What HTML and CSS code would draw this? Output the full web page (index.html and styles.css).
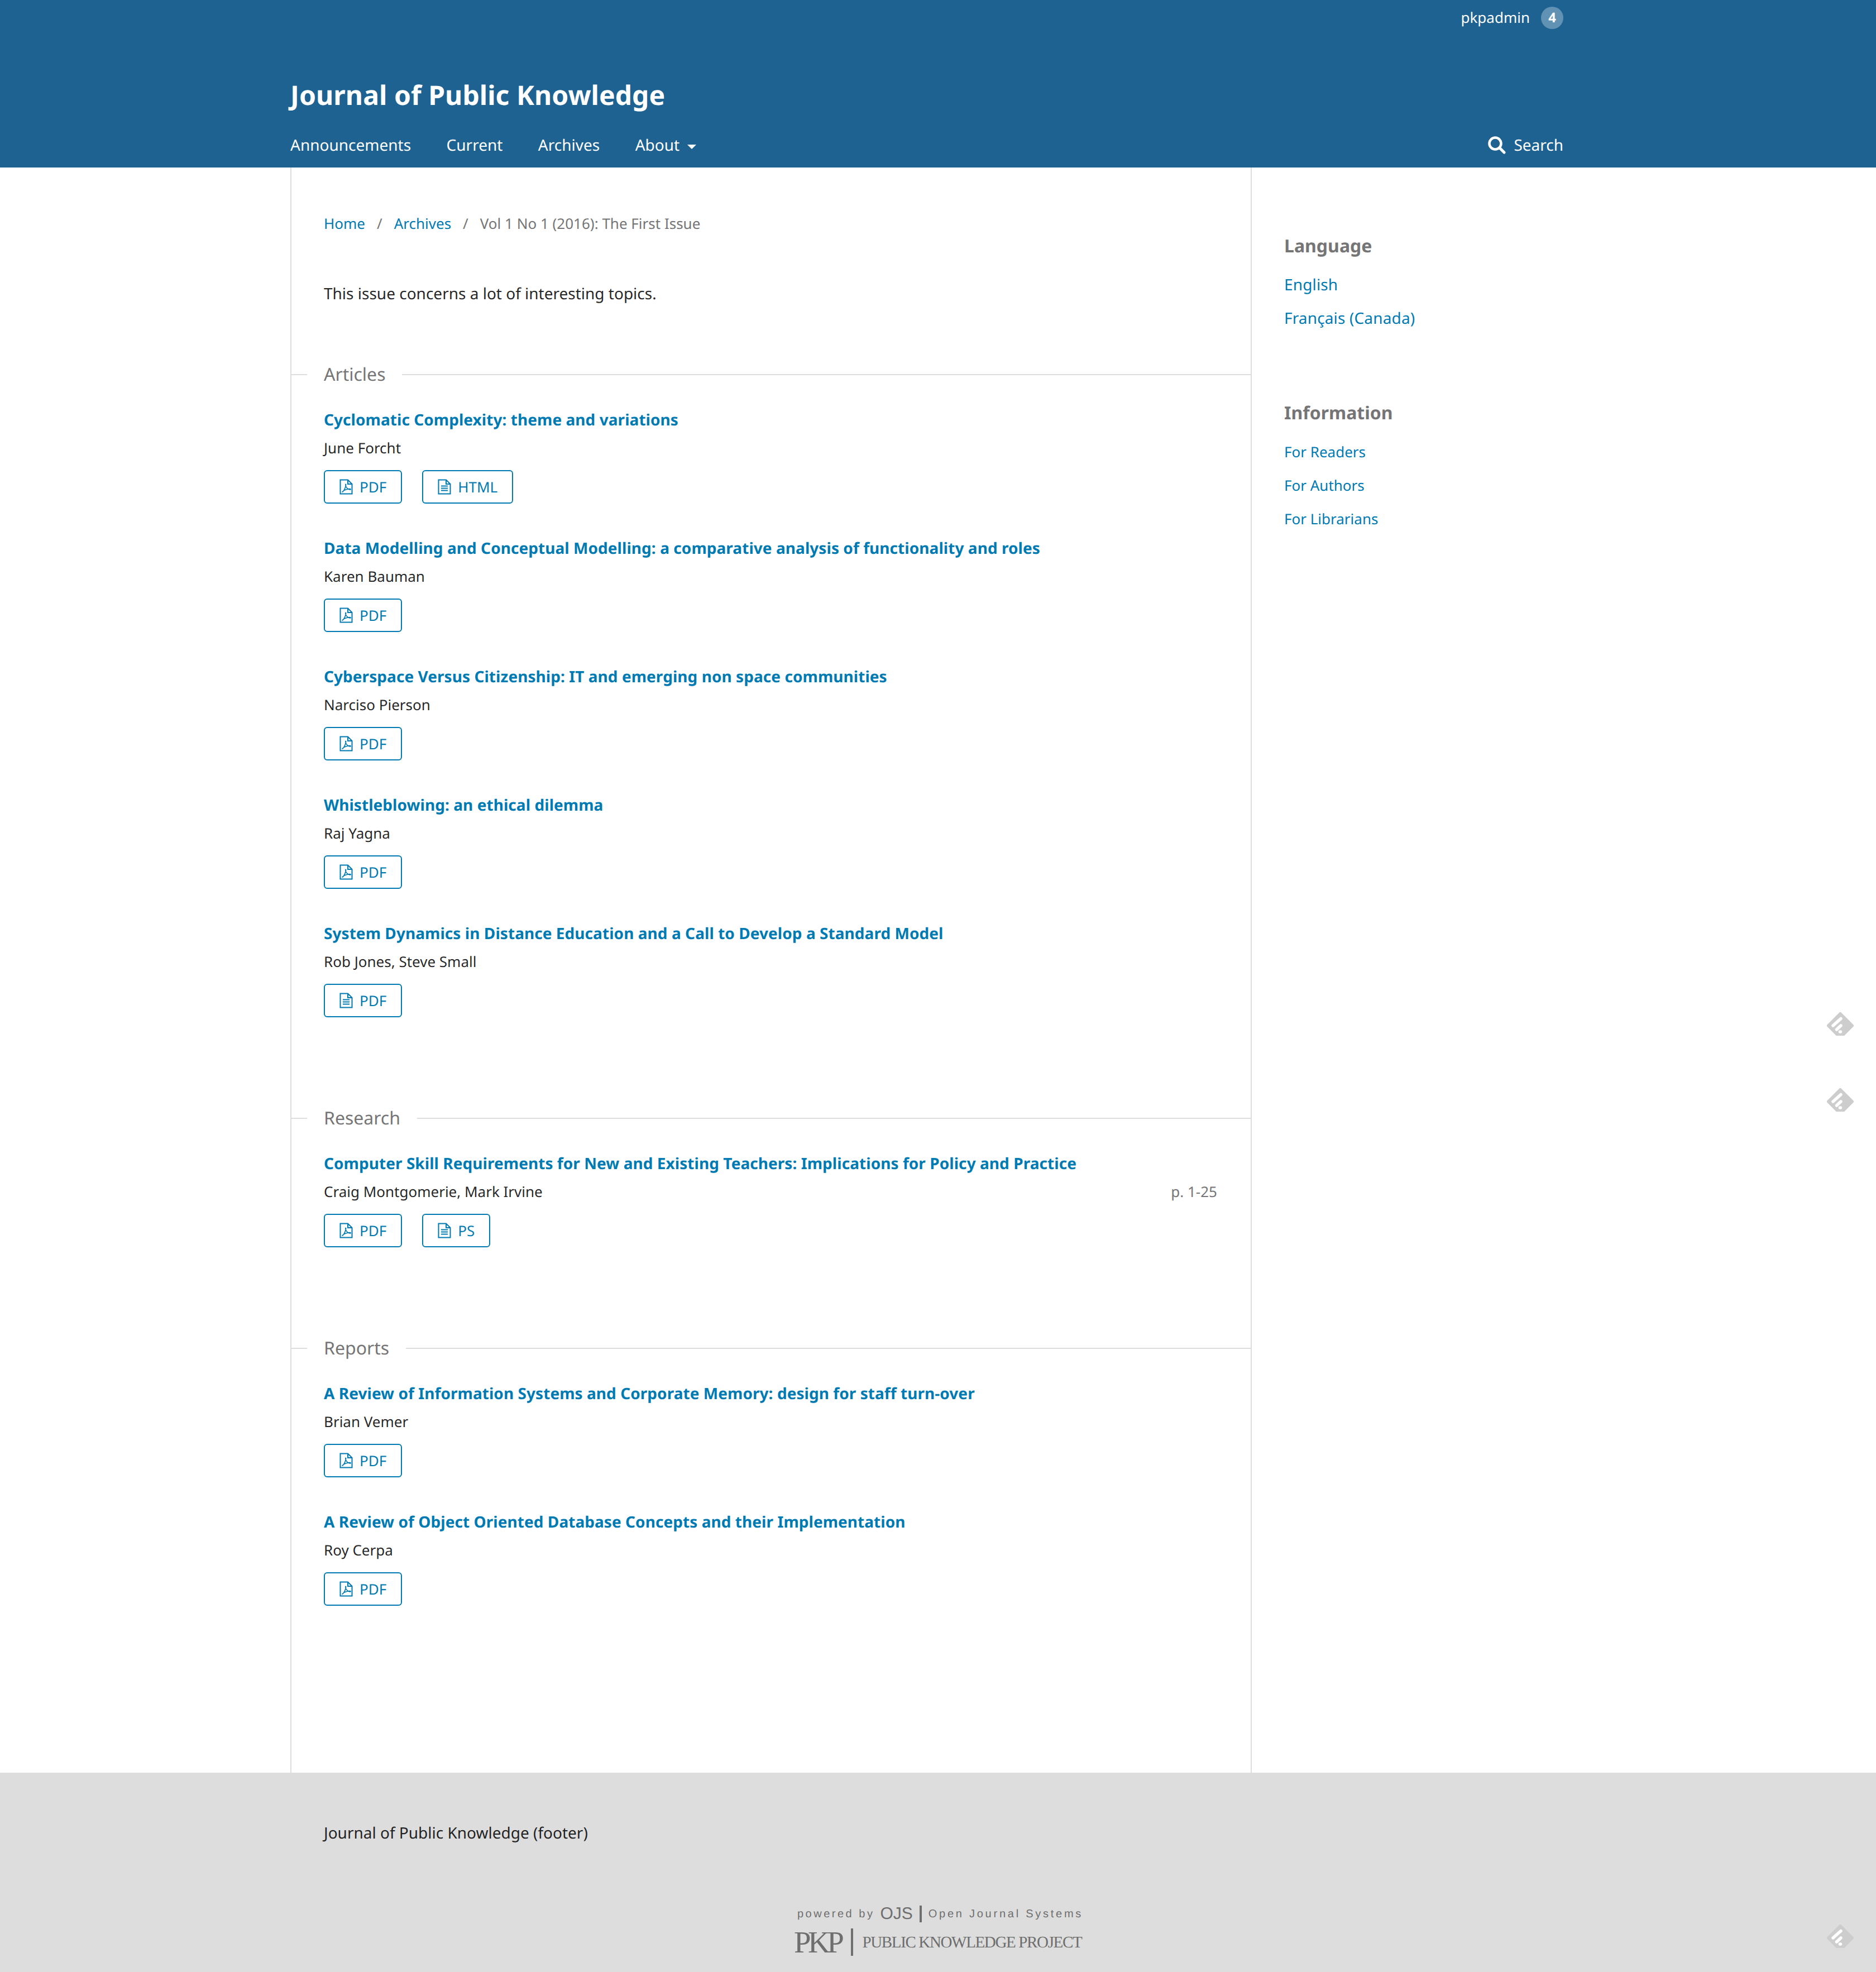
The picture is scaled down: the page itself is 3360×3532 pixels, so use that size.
FILE: index.html
```html
<!DOCTYPE html>
<html lang="en">
<head>
  <meta charset="UTF-8">
  <title>Vol 1 No 1 (2016): The First Issue | Journal of Public Knowledge</title>
  <link rel="stylesheet" href="styles.css">
</head>
<body>
  <svg class="icon-defs" width="0" height="0">
    <symbol id="pdf" viewBox="0 0 24 28">
      <path d="M1.5 1.5H15L22.5 9V26.5H1.5Z M15 1.5V9H22.5" fill="none" stroke="currentColor" stroke-width="2"/>
      <path d="M4.5 23.5C7 22.5 10 17 11.5 11.5C12 9 11 8.5 10.8 10.5C11 14 14 18 19 19C20.5 19 20.5 17.5 18.5 17.5C14 17.5 8 20 5.5 22.5" fill="none" stroke="currentColor" stroke-width="1.6"/>
    </symbol>
    <symbol id="doc" viewBox="0 0 24 28">
      <path d="M1.5 1.5H15L22.5 9V26.5H1.5Z M15 1.5V9H22.5" fill="none" stroke="currentColor" stroke-width="2"/>
      <path d="M6 12.5H18 M6 16.5H18 M6 20.5H18" fill="none" stroke="currentColor" stroke-width="2"/>
    </symbol>
    <symbol id="feedly" viewBox="0 0 48 42">
      <path d="M24 3L45 24L27 42H21L3 24Z" fill="#cdcdcd" stroke="#cdcdcd" stroke-width="6" stroke-linejoin="round"/>
      <path d="M11 24L25 11.500 M17.500 31L25 24 M23.500 35H24.500" fill="none" stroke="#fff" stroke-width="5.500" stroke-linecap="round"/>
    </symbol>
  </svg>

  <header class="site-header">
    <div class="header-inner">
      <div class="user-row">
        <a class="user-link">pkpadmin</a>
        <span class="task-count">4</span>
      </div>
      <div class="site-name">Journal of Public Knowledge</div>
      <nav class="main-nav">
        <a>Announcements</a>
        <a>Current</a>
        <a>Archives</a>
        <a class="has-caret">About</a>
        <a class="search-link">
          <svg width="32" height="32" viewBox="0 0 32 32"><circle cx="13" cy="13" r="10.500" fill="none" stroke="#fff" stroke-width="4.500"/><path d="M21 21L29 29" stroke="#fff" stroke-width="5" stroke-linecap="round"/></svg>
          Search
        </a>
      </nav>
    </div>
  </header>

  <div class="page-wrap">
    <main class="main-col">
      <div class="breadcrumb">
        <a>Home</a><span class="sep">/</span><a>Archives</a><span class="sep">/</span><span>Vol 1 No 1 (2016): The First Issue</span>
      </div>
      <p class="issue-desc">This issue concerns a lot of interesting topics.</p>

      <section class="issue-section">
        <h2 class="section-head"><span>Articles</span></h2>
        <article class="article">
          <h3 class="article-title">Cyclomatic Complexity: theme and variations</h3>
          <div class="article-meta"><span>June Forcht</span></div>
          <div class="galleys">
            <a class="galley"><svg class="galley-icon"><use href="#pdf"/></svg>PDF</a>
            <a class="galley"><svg class="galley-icon"><use href="#doc"/></svg>HTML</a>
          </div>
        </article>
        <article class="article">
          <h3 class="article-title">Data Modelling and Conceptual Modelling: a comparative analysis of functionality and roles</h3>
          <div class="article-meta"><span>Karen Bauman</span></div>
          <div class="galleys">
            <a class="galley"><svg class="galley-icon"><use href="#pdf"/></svg>PDF</a>
          </div>
        </article>
        <article class="article">
          <h3 class="article-title">Cyberspace Versus Citizenship: IT and emerging non space communities</h3>
          <div class="article-meta"><span>Narciso Pierson</span></div>
          <div class="galleys">
            <a class="galley"><svg class="galley-icon"><use href="#pdf"/></svg>PDF</a>
          </div>
        </article>
        <article class="article">
          <h3 class="article-title">Whistleblowing: an ethical dilemma</h3>
          <div class="article-meta"><span>Raj Yagna</span></div>
          <div class="galleys">
            <a class="galley"><svg class="galley-icon"><use href="#pdf"/></svg>PDF</a>
          </div>
        </article>
        <article class="article">
          <h3 class="article-title">System Dynamics in Distance Education and a Call to Develop a Standard Model</h3>
          <div class="article-meta"><span>Rob Jones, Steve Small</span></div>
          <div class="galleys">
            <a class="galley"><svg class="galley-icon"><use href="#doc"/></svg>PDF</a>
          </div>
        </article>
      </section>

      <section class="issue-section">
        <h2 class="section-head"><span>Research</span></h2>
        <article class="article">
          <h3 class="article-title">Computer Skill Requirements for New and Existing Teachers: Implications for Policy and Practice</h3>
          <div class="article-meta"><span>Craig Montgomerie, Mark Irvine</span><span class="pages">p. 1-25</span></div>
          <div class="galleys">
            <a class="galley"><svg class="galley-icon"><use href="#pdf"/></svg>PDF</a>
            <a class="galley"><svg class="galley-icon"><use href="#doc"/></svg>PS</a>
          </div>
        </article>
      </section>

      <section class="issue-section">
        <h2 class="section-head"><span>Reports</span></h2>
        <article class="article">
          <h3 class="article-title">A Review of Information Systems and Corporate Memory: design for staff turn-over</h3>
          <div class="article-meta"><span>Brian Vemer</span></div>
          <div class="galleys">
            <a class="galley"><svg class="galley-icon"><use href="#pdf"/></svg>PDF</a>
          </div>
        </article>
        <article class="article">
          <h3 class="article-title">A Review of Object Oriented Database Concepts and their Implementation</h3>
          <div class="article-meta"><span>Roy Cerpa</span></div>
          <div class="galleys">
            <a class="galley"><svg class="galley-icon"><use href="#pdf"/></svg>PDF</a>
          </div>
        </article>
      </section>
    </main>

    <aside class="sidebar">
      <div class="block">
        <h4 class="block-title">Language</h4>
        <ul class="block-list lang">
          <li><a>English</a></li>
          <li><a>Français (Canada)</a></li>
        </ul>
      </div>
      <div class="block">
        <h4 class="block-title">Information</h4>
        <ul class="block-list small">
          <li><a>For Readers</a></li>
          <li><a>For Authors</a></li>
          <li><a>For Librarians</a></li>
        </ul>
      </div>
    </aside>
  </div>

  <footer class="site-footer">
    <div class="footer-inner">
      <p class="footer-text">Journal of Public Knowledge (footer)</p>
      <div class="brand">
        <div class="brand-top">
          <span class="brand-powered">powered by</span>
          <span class="brand-ojs">OJS</span>
          <i class="brand-bar"></i>
          <span class="brand-open">Open Journal Systems</span>
        </div>
        <div class="brand-bottom">
          <span class="brand-pkp">PKP</span>
          <i class="brand-bar tall"></i>
          <span class="brand-name">PUBLIC KNOWLEDGE PROJECT</span>
        </div>
      </div>
    </div>
  </footer>

  <!-- browser extension buttons sitting on top of the page -->
  <svg class="feedly f1"><use href="#feedly"/></svg>
  <svg class="feedly f2"><use href="#feedly"/></svg>
  <svg class="feedly f3"><use href="#feedly"/></svg>
</body>
</html>
```

FILE: styles.css
```css
* {
  box-sizing: border-box;
}

body {
  margin: 0;
  position: relative;
  font-family: "Noto Sans", sans-serif;
  font-size: 28px;
  line-height: 40px;
  color: rgba(0,0,0,0.87);
  background: #fff;
  text-rendering: geometricPrecision;
}

a {
  color: #007ab2;
}

.icon-defs {
  position: absolute;
}

/* header */
.site-header {
  height: 300px;
  background: #1e6292;
  color: #fff;
}

.header-inner {
  width: 2320px;
  height: 300px;
  margin: 0 auto;
  padding-right: 40px;
  display: flex;
  flex-direction: column;
}

.user-row {
  display: flex;
  justify-content: flex-end;
  align-items: center;
  gap: 20px;
  height: 40px;
  margin-top: 12px;
  font-size: 26px;
}

.user-link {
  color: #fff;
  margin-top: -2px;
}

.task-count {
  width: 40px;
  height: 40px;
  border-radius: 50%;
  background: rgba(255,255,255,0.3);
  text-align: center;
  font-size: 24px;
  font-weight: 700;
  line-height: 40px;
}

.site-name {
  margin-top: 83px;
  font-size: 48px;
  font-weight: 700;
  line-height: 72px;
  height: 72px;
  letter-spacing: 0.080px;
}

.main-nav {
  display: flex;
  align-items: center;
  gap: 63.500px;
  margin-top: 33px;
}

.main-nav a {
  color: #fff;
}

.has-caret::after {
  content: "";
  display: inline-block;
  margin-left: 14px;
  vertical-align: middle;
  border-top: 8px solid #fff;
  border-left: 8px solid transparent;
  border-right: 8px solid transparent;
}

.search-link {
  margin-left: auto;
  display: flex;
  align-items: center;
  gap: 14px;
}

/* main column */
.page-wrap {
  width: 2320px;
  margin: 0 auto;
  display: flex;
}

.main-col {
  width: 1722px;
  height: 2875px;
  padding: 80px 60px 0 58px;
  border-left: 2px solid #ddd;
  border-right: 2px solid #ddd;
}

.breadcrumb {
  font-size: 26px;
  color: #757575;
}

.sep {
  margin: 0 21px;
}

.issue-desc {
  margin: 86px 0 0;
}

.issue-section {
  margin-top: 105px;
}

.issue-section + .issue-section {
  margin-top: 161px;
}

.section-head {
  display: flex;
  align-items: center;
  gap: 30px;
  margin: 0 -60px 0 -58px;
  font-size: 32px;
  font-weight: 400;
  line-height: 40px;
  color: #757575;
}

.section-head::before {
  content: "";
  width: 28px;
  height: 2px;
  background: #ddd;
}

.section-head::after {
  content: "";
  flex: 1;
  height: 2px;
  background: #ddd;
}

.article {
  margin-top: 41px;
}

.article + .article {
  margin-top: 60px;
}

.article-title {
  margin: 0;
  font-size: 28px;
  font-weight: 700;
  line-height: 40px;
  letter-spacing: 0.060px;
  color: #007ab2;
}

.article-meta {
  display: flex;
  justify-content: space-between;
  margin-top: 10px;
  font-size: 26px;
}

.pages {
  color: #757575;
}

.galleys {
  display: flex;
  gap: 36px;
  margin-top: 20px;
}

.galley {
  display: flex;
  align-items: center;
  height: 60px;
  padding: 0 26px;
  border: 2px solid #007ab2;
  border-radius: 6px;
  font-size: 26px;
  line-height: 56px;
  color: #007ab2;
}

.galley-icon {
  width: 24px;
  height: 28px;
  margin-right: 12px;
}

/* sidebar */
.sidebar {
  width: 598px;
  padding: 121px 60px 0 58px;
}

.block + .block {
  margin-top: 130px;
}

.block-title {
  margin: 0;
  font-size: 32px;
  font-weight: 700;
  line-height: 40px;
  color: #757575;
}

.block-list {
  list-style: none;
  margin: 29px 0 0;
  padding: 0;
}

.block-list li + li {
  margin-top: 20px;
}

.block-list.lang {
  letter-spacing: 0.150px;
}

.block-list.small {
  font-size: 26px;
}

/* footer */
.site-footer {
  height: 357px;
  background: #ddd;
}

.footer-inner {
  width: 2320px;
  margin: 0 auto;
  padding: 88px 60px 0;
}

.footer-text {
  margin: 0;
}

.brand {
  width: 520px;
  margin: 110px 0 0 842px;
  color: #6e6e6e;
}

.brand-top,
.brand-bottom {
  display: flex;
  align-items: center;
  white-space: nowrap;
}

.brand-top {
  height: 30px;
  font-family: "Liberation Sans", sans-serif;
}

.brand-powered,
.brand-open {
  font-size: 20px;
  letter-spacing: 3.500px;
}

.brand-open {
  letter-spacing: 3.750px;
}

.brand-powered {
  margin-left: 6px;
}

.brand-ojs {
  margin-left: 10px;
  font-size: 30px;
}

.brand-bar {
  width: 4px;
  height: 30px;
  margin: 0 12px;
  background: #6e6e6e;
}

.brand-bar.tall {
  height: 49px;
  margin: 0 16px 0 18px;
}

.brand-bottom {
  height: 49px;
  margin-top: 11px;
  font-family: "Liberation Serif", serif;
}

.brand-pkp {
  font-size: 55px;
  letter-spacing: -5.500px;
}

.brand-name {
  font-size: 29px;
  letter-spacing: -1.350px;
}

/* feedly buttons */
.feedly {
  position: absolute;
  left: 3272px;
  width: 48px;
  height: 42px;
}

.f1 {
  top: 1813px;
}

.f2 {
  top: 1949px;
}

.f3 {
  top: 3447px;
}
```
